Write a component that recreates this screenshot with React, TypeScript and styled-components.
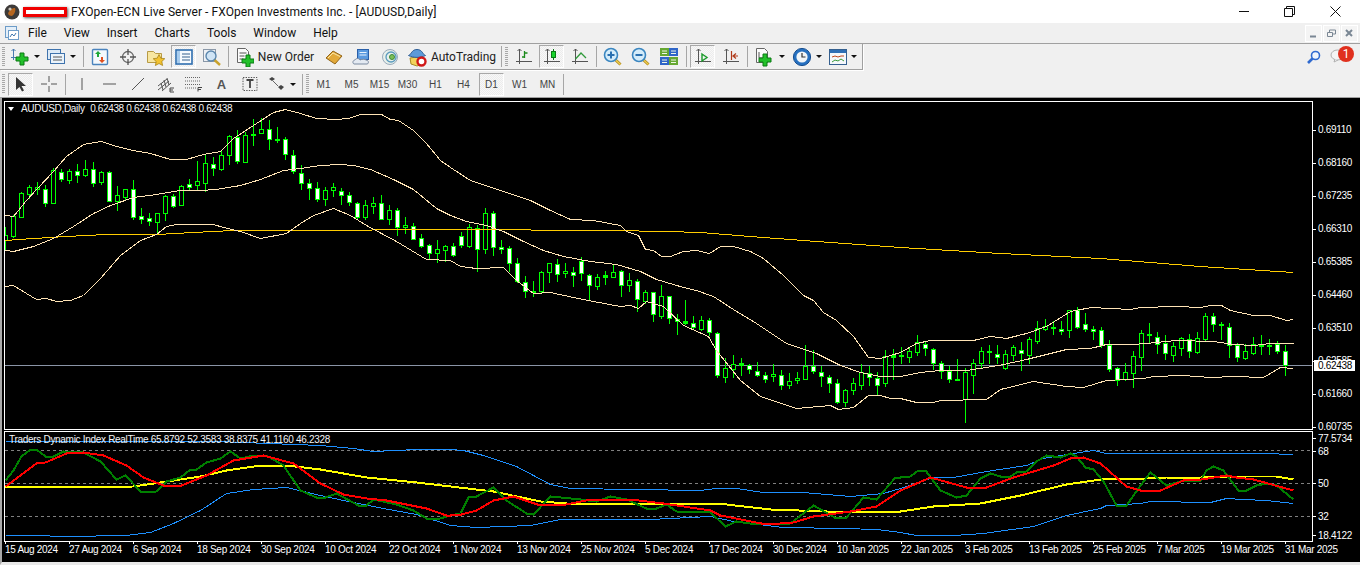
import React from "react";
import styled, { createGlobalStyle } from "styled-components";

const GlobalStyle = createGlobalStyle`
    html, body { margin: 0; padding: 0; background: #f0f0f0; overflow: hidden; }
    #root { width: 1360px; height: 565px; }
`;

const UI_FONT = `Roboto, "Liberation Sans", sans-serif`;
const CHART_FONT = `"Liberation Sans", Arial, sans-serif`;

// ---- chart data, read off the picture in 3x pixels: [origin x, origin y] + values
type Candle = [number, number, number, number, number]; // high, top, bottom, low, kind (0 hollow, 1 white, 2 doji)

const candlesA: Candle[] = [
    [380,405,420,450,0],[345,348,408,412,0],[275,280,350,350,0],[255,262,282,295,0],[245,262,268,282,0],[255,268,308,318,1],[205,210,308,310,0],[208,215,236,244,1],
    [208,214,240,250,0],[193,212,224,246,1],[180,208,224,228,0],[186,208,248,258,1],[212,217,246,252,0],[214,217,302,304,1],[258,286,304,330,0],[268,268,291,298,0],
    [240,268,352,356,1],[325,349,356,370,1],[340,355,362,375,1],[338,340,365,398,0],[285,288,340,360,0],[282,289,317,320,1],[255,259,314,316,0],[238,253,260,268,1],
    [183,244,254,270,0],[165,190,248,272,0],[172,191,203,225,1],[150,166,208,210,0],[105,108,166,192,0],[90,110,182,188,1],[95,106,185,185,0],[57,103,106,135,2],
    [55,88,98,100,0],[60,88,118,148,1],[82,118,121,125,2],[112,118,163,177,1],[150,164,214,218,1],[195,220,250,267,1],[238,250,265,297,1],[246,265,296,304,1],
    [260,271,296,315,0],[250,262,271,288,0],[265,274,286,312,1],[277,286,307,316,1],[306,310,350,358,1],[300,316,350,356,0],[292,310,319,340,0],[285,310,356,358,1],
    [315,331,356,372,0],[325,331,382,405,1],[352,376,382,398,0],[370,377,418,418,1],[403,415,437,440,1],[432,436,460,478,1],[420,448,460,485,0],[435,439,449,482,0],
];
const candlesB: Candle[] = [
    [128,139,166,168,1],[97,109,134,140,1],[72,80,137,142,0],[75,84,148,212,1],[25,38,148,158,0],[33,38,142,165,1],[120,140,146,158,1],[138,145,190,212,1],
    [175,190,242,245,1],[228,245,274,290,1],[243,272,277,287,0],[212,217,273,277,0],[190,190,217,246,0],[178,193,221,243,1],[190,214,220,231,0],[202,215,226,258,1],
    [170,184,220,240,1],[222,224,254,297,1],[222,230,257,266,0],[212,226,230,251,2],[195,217,230,230,0],[210,214,254,288,1],[220,241,254,273,0],[238,243,298,332,1],
    [270,277,303,308,0],[275,277,343,362,1],[256,289,347,355,0],[287,289,355,368,1],[342,358,364,402,1],[300,364,368,372,2],[348,368,380,384,1],[348,361,387,390,0],
    [355,361,397,405,1],[396,400,526,530,1],[474,505,530,546,0],[465,493,506,530,0],[475,490,495,525,2],[492,494,508,518,1],[486,512,524,527,1],[517,524,536,545,1],
    [492,523,529,542,0],[510,524,556,567,1],[519,542,556,563,0],[516,533,541,550,0],[435,497,536,536,0],[450,497,514,520,1],[498,515,529,557,1],[526,530,550,576,1],
    [537,550,607,608,1],[566,571,605,618,0],[534,550,571,582,0],[492,517,554,566,0],[497,518,532,555,1],[515,535,556,586,1],[450,467,548,557,0],[447,464,470,536,2],
];
const candlesC: Candle[] = [
    [200,226,228,250,2],[200,214,230,246,0],[165,187,215,225,0],[182,191,205,225,1],[205,208,248,266,1],[244,250,274,294,1],[258,274,296,306,1],[238,298,300,300,2],
    [265,276,356,426,0],[238,250,284,340,0],[200,214,250,265,0],[195,214,217,248,2],[195,221,230,250,1],[210,222,263,266,0],[195,202,225,240,0],[186,211,220,270,1],
    [172,178,224,248,0],[124,145,182,188,0],[118,138,146,150,0],[124,140,143,162,2],[122,146,152,162,1],[90,90,151,170,0],[82,91,140,143,1],[100,133,146,152,1],
    [138,148,154,178,1],[140,151,194,202,1],[180,195,266,272,1],[262,265,300,315,1],[248,276,296,300,0],[212,229,278,320,0],[150,160,230,270,0],[128,162,164,190,2],
    [156,170,193,220,1],[165,190,220,238,1],[186,199,224,243,0],[170,175,203,226,0],[162,178,214,230,1],[155,175,215,220,0],[100,108,177,180,0],[98,109,133,152,1],
    [125,133,136,178,2],[130,140,195,230,1],[190,196,230,242,1],[192,214,234,237,0],[172,193,218,222,0],[166,195,196,222,0],[178,194,199,222,2],[184,191,214,218,1],
    [196,214,256,285,1],
];

const path = (parts: [number, number, number[]][]) =>
    parts
        .map(([ox, oy, v]) => {
            const out: string[] = [];
            for (let i = 0; i < v.length; i += 2) {
                out.push(`${Math.floor(ox + v[i] / 3) + 0.5},${Math.floor(oy + v[i + 1] / 3) + 0.5}`);
            }
            return out.join(" ");
        })
        .join(" ");

const bandUpper = path([
    [0,100,[16,345,40,350,80,300,112,265,160,215,200,170,250,132,305,124,350,138,400,152,450,160,510,178,560,178,610,162,660,155,700,115,760,75,820,38,855,28,900,40,950,55,1010,58,1045,55,1080,44,1145,43,1170,57,1195,60,1240,90,1280,130,1320,180,1350,202]],
    [450,200,[60,-60,150,-30,240,0,300,30,360,58,430,62,510,75,530,95,565,105,585,147,610,152,635,168,660,170,700,155,740,150,778,160,810,140,850,140,900,153,940,175,1000,225,1060,285,1090,300,1120,338,1160,360,1210,410,1255,472,1290,475,1350,457]],
    [900,280,[50,190,90,182,220,182,270,170,320,176,380,160,440,140,510,95,575,82,690,88,720,82,830,80,900,82,930,76,965,76,990,90,1060,105,1110,105,1160,122,1180,118]],
]);
const bandMiddle = path([
    [0,100,[16,452,40,453,100,438,160,415,220,380,280,340,330,315,400,292,470,282,540,272,600,270,650,267,720,255,780,238,850,212,900,205,960,196,1020,193,1060,197,1110,208,1180,238,1240,268,1310,325]],
    [450,200,[0,47,50,65,110,75,160,95,220,125,280,152,340,168,420,185,500,192,570,215,620,238,700,262,740,270,790,290,850,328,920,370,1010,430,1100,460,1170,495,1230,518,1290,530,1350,528]],
    [900,280,[60,278,120,272,200,272,260,262,310,252,380,238,440,222,500,208,570,205,620,193,700,193,770,186,830,182,940,184,1000,192,1060,196,1110,190,1180,190]],
]);
const bandLower = path([
    [0,100,[16,560,40,557,80,580,110,597,140,596,170,604,210,602,250,585,300,535,360,465,420,420,470,402,500,380,530,373,640,373,670,382,720,395,780,415,860,400,900,370,940,345,1000,325,1050,345,1100,375,1190,425,1280,478,1350,482]],
    [450,200,[30,198,80,205,160,203,200,240,250,280,300,278,370,293,430,305,510,320,540,316,565,325,590,305,640,320,700,375,775,410,800,450,870,540,930,590,1040,625,1140,616,1165,628,1210,622,1255,587,1290,587,1320,596,1350,596]],
    [900,280,[50,367,100,367,120,360,260,358,300,328,400,305,500,318,550,322,620,300,730,295,760,288,850,286,930,292,1000,290,1090,292,1140,262,1180,264]],
]);
const movingAverage = path([
    [0,100,[16,421,100,414,200,408,320,403,470,402,580,398,700,392,1050,392,1180,388]],
    [450,200,[0,88,480,90,650,93,750,98,900,108,1100,125,1350,142]],
    [900,200,[300,160,600,175,900,198,1180,218]],
]);

const tdiUpper = path([
    [0,425,[16,48,650,48,960,60,1060,70,1120,78,1250,73]],
    [450,425,[0,74,40,76,100,90,200,125,300,178,360,190,750,195,800,190,860,190,940,203,1060,203,1200,214,1300,205]],
    [900,425,[0,190,100,158,160,157,260,138,380,120,430,100,500,88,580,76,620,85,850,85,1090,85,1180,88]],
]);
const tdiLower = path([
    [0,425,[16,331,100,332,200,334,380,331,450,322,520,295,600,255,680,206,760,193,860,187,960,210,1030,225,1150,250,1250,268]],
    [450,425,[0,300,80,308,240,300,330,282,600,282,780,275,850,290,1000,307,1180,310,1280,313]],
    [900,425,[0,322,50,331,160,331,250,326,400,305,500,272,600,250,620,240,720,236,750,230,930,232,980,220,1030,224,1100,226,1180,235]],
]);
const tdiYellow = path([
    [0,425,[16,187,400,185,480,173,600,155,680,135,780,122,860,120,960,132,1100,158,1250,172]],
    [450,425,[0,185,130,200,270,230,350,235,830,237,960,254,1130,260]],
    [900,425,[0,258,100,245,240,236,360,210,500,178,600,163,740,160,800,157,900,158,1040,153,1130,155,1180,162]],
]);
const tdiRed = path([
    [0,425,[16,185,110,115,135,113,200,85,250,83,310,92,380,120,430,157,490,180,545,182,620,150,700,107,790,90,880,115,960,175,1030,208,1100,221,1160,225,1280,250,1340,270]],
    [450,425,[0,270,35,268,80,255,130,225,190,215,270,240,350,238,420,222,540,222,640,235,780,255,810,270,950,297,1030,293,1090,275,1200,258,1280,245]],
    [900,425,[0,197,90,158,200,187,260,188,340,158,460,122,510,100,550,98,600,115,680,185,720,195,780,195,850,165,905,163,980,150,1010,158,1060,162,1180,195]],
]);
const tdiGreen = path([
    [0,425,[16,165,40,135,65,95,90,72,110,72,135,93,160,93,190,80,250,83,300,108,350,162,375,150,425,203,470,200,500,170,540,158,570,133,590,133,620,112,660,100,690,78,720,100,760,90,800,90,850,120,900,195,950,217,975,217,1010,205,1075,240,1100,240,1120,222,1190,237,1240,255,1280,280,1310,283]],
    [450,425,[0,270,30,265,55,218,80,215,130,187,170,225,230,265,250,267,300,215,390,222,440,230,480,215,530,222,590,250,620,250,650,238,680,258,780,262,825,305,860,288,920,298,1020,295,1090,240,1160,280,1190,277,1240,218,1280,222,1335,158]],
    [900,425,[0,158,30,155,55,137,75,137,120,195,170,218,200,210,240,160,270,145,300,155,330,155,350,143,380,140,410,108,440,90,480,98,510,85,530,95,555,128,580,132,610,170,650,242,680,242,720,180,750,143,800,180,850,165,900,165,920,135,940,125,970,135,1015,195,1040,195,1070,180,1100,175,1130,180,1180,222]],
]);

const prices = ["0.69110", "0.68160", "0.67235", "0.66310", "0.65385", "0.64460", "0.63510", "0.62585", "0.61660", "0.60735"];
const indicatorScale: [string, number][] = [["77.5734", 14], ["68", 12], ["50", 52], ["32", 14], ["18.4122", 24]];
const dates = ["15 Aug 2024", "27 Aug 2024", "6 Sep 2024", "18 Sep 2024", "30 Sep 2024", "10 Oct 2024", "22 Oct 2024", "1 Nov 2024", "13 Nov 2024", "25 Nov 2024", "5 Dec 2024", "17 Dec 2024", "30 Dec 2024", "10 Jan 2025", "22 Jan 2025", "3 Feb 2025", "13 Feb 2025", "25 Feb 2025", "7 Mar 2025", "19 Mar 2025", "31 Mar 2025"];

// ---- styled parts
const Page = styled.div`
    width: 1360px;
    height: 565px;
    display: flex;
    flex-direction: column;
    background: #f0f0f0;
    font-family: ${UI_FONT};
    overflow: hidden;
`;

const TitleBar = styled.div`
    height: 23px;
    display: flex;
    align-items: center;
    background: #fff;
    padding-left: 4px;
    font-size: 12px;
    letter-spacing: 0.06px;
    color: #111;
`;

const Redaction = styled.div`
    width: 38px;
    height: 4px;
    margin: 0 4px 0 3px;
    border: 3px solid #f00000;
    background: #fff;
    box-shadow: 1px 1px 3px #555;
`;

const WindowButtons = styled.div`
    margin-left: auto;
    display: flex;
    padding-right: 2px;
`;

const WindowButton = styled.div`
    width: 45.5px;
    height: 20px;
    display: flex;
    align-items: center;
    justify-content: center;
`;

const MenuBar = styled.div`
    height: 20px;
    display: flex;
    align-items: center;
    gap: 17px;
    padding-left: 5px;
    font-size: 12px;
    color: #111;
    border-bottom: 1px solid #a0a0a0;
`;

const MenuLogo = styled.div`
    width: 14px;
    height: 14px;
    margin-right: -8px;
    display: flex;
`;

const MdiButtons = styled.div`
    margin-left: auto;
    display: flex;
    gap: 1px;
    padding-right: 2px;
`;

const MdiButton = styled.div`
    width: 17px;
    height: 17px;
    display: flex;
    align-items: center;
    justify-content: center;
    background: #f4f4f4;
    border: 1px solid #fff;
    box-sizing: border-box;
`;

const ToolRow = styled.div<{ $last?: boolean }>`
    height: 27px;
    display: flex;
    box-sizing: border-box;
    border-bottom: 1px solid ${(p) => (p.$last ? "#a0a0a0" : "transparent")};
`;

const Toolbar = styled.div<{ $edge?: boolean }>`
    height: 26px;
    display: flex;
    align-items: center;
    gap: 3px;
    padding: 0 3px 0 2px;
    box-sizing: border-box;
    ${(p) => p.$edge && "border-right: 1px solid #a0a0a0; border-bottom: 1px solid #a0a0a0; box-shadow: 1px 1px 0 #fff;"}
`;

const Grip = styled.div<{ $l?: number; $r?: number }>`
    width: 3px;
    height: 20px;
    margin-left: ${(p) => p.$l ?? 0}px;
    margin-right: ${(p) => p.$r ?? 0}px;
    background: repeating-linear-gradient(#a8a8a8 0 1px, transparent 1px 2px);
`;

const Sep = styled.div<{ $l?: number }>`
    width: 1px;
    height: 21px;
    margin-left: ${(p) => p.$l ?? 0}px;
    background: #a6a6a6;
`;

const Btn = styled.div<{ $w?: number; $on?: boolean }>`
    width: ${(p) => p.$w ?? 25}px;
    height: 23px;
    flex: none;
    display: flex;
    align-items: center;
    justify-content: center;
    gap: 4px;
    box-sizing: border-box;
    color: #222;
    font-size: 12px;
    ${(p) =>
        p.$on &&
        `border: 1px solid; border-color: #a8a8a8 #fff #fff #a8a8a8;
         background: repeating-conic-gradient(#f8f8f8 0 25%, #ececec 0 50%) 0 0 / 2px 2px;`}
`;

const Period = styled(Btn)`
    color: #444;
    font-size: 10px;
    font-family: ${CHART_FONT};
`;

const Caret = styled.i`
    width: 0;
    height: 0;
    border: 3px solid transparent;
    border-top: 3px solid #111;
    border-bottom: 0;
`;

const RightTools = styled.div`
    margin-left: auto;
    display: flex;
    align-items: center;
    gap: 9px;
    padding-right: 6px;
    height: 26px;
`;

const Notice = styled.div`
    position: relative;
    width: 24px;
    height: 20px;
`;

const Badge = styled.div`
    position: absolute;
    top: -1px;
    right: 0;
    width: 16px;
    height: 16px;
    border-radius: 50%;
    background: #e0301e;
    color: #fff;
    font-size: 12px;
    line-height: 16px;
    text-align: center;
`;

const ChartArea = styled.div`
    flex: 1;
    min-height: 0;
    background: #000;
    border-left: 2px solid #a8a8a8;
    border-bottom: 3px solid #e8e8e8;
    padding: 3px 0 0 2px;
    color: #fff;
    font-family: ${CHART_FONT};
    font-size: 10px;
    letter-spacing: -0.3px;
    overflow: hidden;
`;

const Pane = styled.div<{ $h: number }>`
    display: flex;
    height: ${(p) => p.$h}px;
    margin-bottom: 1px;
`;

const Plot = styled.div`
    position: relative;
    width: 1309px;
    height: 100%;
    box-sizing: border-box;
    border: 1px solid #fff;
    flex: none;
    overflow: hidden;
    svg { display: block; }
`;

const Legend = styled.div<{ $top: number; $left: number }>`
    position: absolute;
    top: ${(p) => p.$top}px;
    left: ${(p) => p.$left}px;
    white-space: pre;
    line-height: 12px;
    color: #f4f4f4;
`;

const LegendValues = styled.span`
    margin-left: 3px;
    letter-spacing: -0.35px;
`;

const LegendArrow = styled.i`
    display: inline-block;
    width: 0;
    height: 0;
    border: 3.5px solid transparent;
    border-top: 4px solid #fff;
    border-bottom: 0;
    margin: 0 7px 1px 0;
`;

const PriceScale = styled.div`
    position: relative;
    padding-top: 12px;
    width: 47px;
`;

const ScaleRow = styled.div<{ $h: number }>`
    height: ${(p) => p.$h}px;
    display: flex;
    align-items: center;
    padding-left: 5px;
    position: relative;
    &::before {
        content: "";
        position: absolute;
        left: 0;
        top: 50%;
        width: 3px;
        height: 1px;
        background: #fff;
    }
`;

const PriceTag = styled.div`
    position: absolute;
    left: 1px;
    top: 259px;
    width: 37px;
    height: 11px;
    padding-left: 4px;
    background: #fff;
    color: #000;
    line-height: 11px;
`;

const IndicatorScale = styled.div`
    width: 47px;
`;

const DateAxis = styled.div`
    display: flex;
    padding-left: 1px;
    margin-top: -2px;
    height: 20px;
`;

const DateCell = styled.div`
    width: 64px;
    flex: none;
    position: relative;
    padding-top: 3px;
    line-height: 12px;
    white-space: nowrap;
    &::before {
        content: "";
        position: absolute;
        left: 0;
        top: 0;
        width: 1px;
        height: 3px;
        background: #fff;
    }
`;

// ---- drawings
const Plus = ({ x, y, s = 5 }: { x: number; y: number; s?: number }) => (
    <path d={`M${x - s / 3} ${y - s}h${(2 * s) / 3}v${(2 * s) / 3}h${(2 * s) / 3}v${(2 * s) / 3}h-${(2 * s) / 3}v${(2 * s) / 3}h-${(2 * s) / 3}v-${(2 * s) / 3}h-${(2 * s) / 3}v-${(2 * s) / 3}h${(2 * s) / 3}z`} fill="#22c02a" stroke="#0a7a14" strokeWidth="1" />
);

const Axes = ({ children }: { children?: React.ReactNode }) => (
    <svg width="18" height="18" viewBox="0 0 18 18">
        <path d="M4.5 1v15M1 13.5h16M2.5 3l2-2 2 2" fill="none" stroke="#555" strokeWidth="1" />
        {children}
    </svg>
);

const Lens = ({ minus }: { minus?: boolean }) => (
    <svg width="20" height="20" viewBox="0 0 20 20">
        <path d="M11.5 12l6 5.5" stroke="#b08a20" strokeWidth="3" />
        <path d="M11.5 12l6 5.5" stroke="#f0d050" strokeWidth="1.2" />
        <circle cx="8" cy="8" r="6.5" fill="#d4ecfa" stroke="#3a86c0" strokeWidth="1.6" />
        <path d={minus ? "M4.5 8h7" : "M4.5 8h7M8 4.5v7"} stroke="#2a70b0" strokeWidth="2" />
    </svg>
);

const icons: Record<string, React.ReactNode> = {
    newChart: (
        <svg width="20" height="18" viewBox="0 0 20 18">
            <path d="M3.5 1v11M1 9.5h13M1.5 3l2-2 2 2M12 7.5l2 2-2 2" fill="none" stroke="#4a7ab0" />
            <Plus x={12} y={11} s={6} />
        </svg>
    ),
    profiles: (
        <svg width="20" height="18" viewBox="0 0 20 18">
            <rect x="1.5" y="1.5" width="13" height="10" fill="#dceaf7" stroke="#3f73ad" />
            <rect x="4.5" y="5.5" width="14" height="10" fill="#eaf3fb" stroke="#3f73ad" />
            <path d="M7 9h9M7 12h9" stroke="#555" />
        </svg>
    ),
    watch: (
        <svg width="18" height="18" viewBox="0 0 18 18">
            <rect x="1.5" y="1.5" width="15" height="15" rx="1" fill="#f4f8fc" stroke="#4a83bd" strokeWidth="1.4" />
            <path d="M7 3l3 3H8v3H6V6H4z" fill="#1ea83a" />
            <path d="M11 15l3-3h-2V9h-2v3H8z" fill="#e0501e" />
        </svg>
    ),
    cross: (
        <svg width="18" height="18" viewBox="0 0 18 18">
            <circle cx="9" cy="9" r="5.5" fill="none" stroke="#666" strokeWidth="1.3" />
            <path d="M9 1v6M9 11v6M1 9h6M11 9h6" stroke="#555" strokeWidth="1.3" />
        </svg>
    ),
    folder: (
        <svg width="20" height="18" viewBox="0 0 20 18">
            <path d="M1.5 3.5h6l2 2h6v9h-14z" fill="#f7e6a0" stroke="#b79a45" />
            <path d="M13 6.5l1.8 3.7 4 .5-3 2.8.8 4-3.6-2-3.6 2 .8-4-3-2.8 4-.5z" fill="#f2c230" stroke="#a88418" strokeWidth=".8" />
        </svg>
    ),
    terminal: (
        <svg width="18" height="16" viewBox="0 0 18 16">
            <rect x="1" y="1" width="16" height="14" fill="#f6fafe" stroke="#2f6fb0" strokeWidth="1.6" />
            <path d="M2 2v12h3V2z" fill="#a9cdee" />
            <path d="M7 5h8M7 8h8M7 11h8" stroke="#36608c" />
        </svg>
    ),
    tester: (
        <svg width="20" height="20" viewBox="0 0 20 20">
            <rect x="1.5" y="2.5" width="12" height="12" fill="#eef1f5" stroke="#8a98a8" />
            <path d="M12 12.5l6 5.5" stroke="#c9a22c" strokeWidth="2.4" />
            <circle cx="9" cy="9" r="5" fill="#cfe4f5" stroke="#5a86ad" strokeWidth="1.4" />
        </svg>
    ),
    order: (
        <svg width="18" height="20" viewBox="0 0 18 20">
            <path d="M1.5 1.5h8l3 3v11h-11z" fill="#fbfbfb" stroke="#666" />
            <path d="M3.5 6h7M3.5 9h5M3.5 12h4" stroke="#555" />
            <Plus x={12} y={14} s={6} />
        </svg>
    ),
    book: (
        <svg width="18" height="16" viewBox="0 0 18 16">
            <path d="M1 9l7-7 9 5-7 8z" fill="#e2a93a" stroke="#92651a" />
            <path d="M3 9l5-5 7 3.5" fill="none" stroke="#f9e6a8" />
        </svg>
    ),
    cloud: (
        <svg width="20" height="18" viewBox="0 0 20 18">
            <rect x="5.5" y="1.5" width="11" height="10" fill="#5a9ae0" stroke="#2a5fa8" />
            <path d="M7.5 4.5h7M7.5 7h7" stroke="#e8f2fc" />
            <path d="M2 16c-2-1-1-4 1-4 1-2 4-2 5 0 2-1 5-1 6 0 3 0 3 4 1 4z" fill="#e4eaf2" stroke="#7b8aa0" />
        </svg>
    ),
    signal: (
        <svg width="18" height="18" viewBox="0 0 18 18">
            <circle cx="9" cy="9" r="7.5" fill="#e8f0ea" stroke="#9ab" strokeWidth="1" />
            <circle cx="10" cy="9" r="5" fill="none" stroke="#5a9abf" strokeWidth="1.3" />
            <circle cx="11" cy="9" r="2.5" fill="#7dbf58" stroke="#3b8a3a" />
        </svg>
    ),
    auto: (
        <svg width="20" height="20" viewBox="0 0 20 20">
            <path d="M3 11l7-1 7 1-1 6-6 2-6-2z" fill="#f3d35a" stroke="#a88b25" />
            <path d="M1.5 8.5c3-1 3-6 8.5-6s5.5 5 8.5 6c-5 2.5-12 2.5-17 0z" fill="#5d9ad8" stroke="#2f5e96" />
            <circle cx="14.5" cy="14.5" r="4" fill="#fff" stroke="#d01818" strokeWidth="2.4" />
        </svg>
    ),
    bars: (
        <Axes>
            <path d="M9.5 3v7M9.5 9H7M9.5 5h3" stroke="#1a8a1a" strokeWidth="1.3" fill="none" />
        </Axes>
    ),
    candle: (
        <Axes>
            <path d="M10.5 1v11" stroke="#0a7a14" />
            <rect x="8.5" y="3.5" width="4" height="6" fill="#19d32c" stroke="#0a7a14" />
        </Axes>
    ),
    line: (
        <Axes>
            <path d="M4.5 11L10 5l5 5" fill="none" stroke="#2f9a3a" strokeWidth="1.3" />
        </Axes>
    ),
    zoomIn: <Lens />,
    zoomOut: <Lens minus />,
    tile: (
        <svg width="18" height="17" viewBox="0 0 18 17">
            <rect x="0" y="0" width="9" height="8" fill="#66a832" />
            <rect x="9" y="0" width="9" height="8" fill="#2f66c8" />
            <rect x="0" y="9" width="9" height="8" fill="#2f66c8" />
            <rect x="9" y="9" width="9" height="8" fill="#66a832" />
            <path d="M2 3h5M2 5.5h5M11 3h5M11 5.5h5M2 12h5M2 14.5h5M11 12h5M11 14.5h5" stroke="#eef6e6" />
        </svg>
    ),
    scroll: (
        <Axes>
            <path d="M8 6v7l5-3.5z" fill="none" stroke="#1a9a2a" strokeWidth="1.4" />
        </Axes>
    ),
    shift: (
        <Axes>
            <path d="M9.5 3v9M16 8h-4M14 5.5L11 8l3 2.5" fill="none" stroke="#b03a1a" strokeWidth="1.2" />
        </Axes>
    ),
    addWindow: (
        <svg width="22" height="20" viewBox="0 0 22 20">
            <path d="M3.5 1.5h8l3 3v11h-11z" fill="#fbfbfb" stroke="#666" />
            <path d="M6 5v6h6" fill="none" stroke="#555" />
            <Plus x={12} y={13} s={6} />
        </svg>
    ),
    clock: (
        <svg width="20" height="20" viewBox="0 0 20 20">
            <circle cx="10" cy="10" r="8.6" fill="#2670c0" stroke="#184f90" />
            <circle cx="10" cy="10" r="5.6" fill="#f1f5f8" />
            <path d="M10 6v4h3.5" fill="none" stroke="#333" strokeWidth="1.2" />
        </svg>
    ),
    template: (
        <svg width="18" height="16" viewBox="0 0 18 16">
            <rect x=".5" y=".5" width="17" height="15" fill="#f6f8fb" stroke="#35608f" />
            <rect x="1" y="1" width="16" height="3" fill="#2f6fb5" />
            <path d="M3 8l3-1 3 1 3-1 3 0" fill="none" stroke="#c0481e" />
            <path d="M3 13l3-2 3 1 3-2 3 2" fill="none" stroke="#3a9a3a" />
        </svg>
    ),
    pointer: (
        <svg width="14" height="16" viewBox="0 0 14 16">
            <path d="M2 1v13l3.5-3 2.5 4.5 2-1-2.5-4.5H12z" fill="#333" />
        </svg>
    ),
    crossLine: (
        <svg width="16" height="16" viewBox="0 0 16 16">
            <path d="M8 0v6M8 10v6M0 8h6M10 8h6" stroke="#555" />
        </svg>
    ),
    vert: (
        <svg width="16" height="16" viewBox="0 0 16 16">
            <path d="M8 2v12" stroke="#555" />
        </svg>
    ),
    horiz: (
        <svg width="16" height="16" viewBox="0 0 16 16">
            <path d="M1 8h13" stroke="#555" />
        </svg>
    ),
    trend: (
        <svg width="16" height="16" viewBox="0 0 16 16">
            <path d="M2 14L14 2" stroke="#555" />
        </svg>
    ),
    channel: (
        <svg width="18" height="18" viewBox="0 0 18 18">
            <path d="M1 11l9-7M1 15l11-9M5 16l9-8M4 8l2 7M7 5l2 7M10 3l2 7" stroke="#555" fill="none" />
            <path d="M13 17v-4h4M13 15h3M13 17h4" stroke="#444" fill="none" />
        </svg>
    ),
    fib: (
        <svg width="18" height="16" viewBox="0 0 18 16">
            <path d="M0 1.5h15M0 5h15M0 8.5h15M0 12h11" stroke="#666" strokeDasharray="1 1" />
            <path d="M13 15.5v-4h4M13 13.5h3" stroke="#444" fill="none" />
        </svg>
    ),
    textFrame: (
        <svg width="16" height="16" viewBox="0 0 16 16">
            <path d="M1 1.5h14v13H1z" fill="none" stroke="#555" strokeDasharray="1.4 1.2" />
            <path d="M4.5 4h7M8 4v8" stroke="#444" strokeWidth="1.8" />
        </svg>
    ),
    arrows: (
        <svg width="18" height="16" viewBox="0 0 18 16">
            <path d="M1 3l3-2 3 2-3 2z" fill="#444" />
            <path d="M5 5l5 5" stroke="#666" />
            <path d="M10 11l3-2 3 2-3 3z" fill="#444" />
        </svg>
    ),
    search: (
        <svg width="15" height="15" viewBox="0 0 15 15">
            <circle cx="9.5" cy="5.5" r="4" fill="#eef4fc" stroke="#2f6ad0" strokeWidth="1.6" />
            <path d="M6.5 8.5L2 13" stroke="#2f6ad0" strokeWidth="2.6" />
        </svg>
    ),
    bubble: (
        <svg width="16" height="16" viewBox="0 0 16 16">
            <ellipse cx="7.5" cy="8" rx="6.5" ry="5" fill="#f4f4f4" stroke="#b0b0b0" />
            <path d="M5 12l-1 3 4-2" fill="#f4f4f4" stroke="#b0b0b0" />
        </svg>
    ),
};

const LargeA = styled.span`
    font-family: ${CHART_FONT};
    font-size: 13px;
    font-weight: 700;
    color: #555;
`;

const AppBall = () => (
    <svg width="16" height="16" viewBox="0 0 16 16">
        <circle cx="8" cy="8" r="7.5" fill="#3d3a38" />
        <path d="M4 10c1-4 4-6 7-6 1 2 0 6-3 8-2 0-3-1-4-2z" fill="#b5651d" />
        <circle cx="6" cy="5" r="1.6" fill="#c9c4bb" />
    </svg>
);

const MenuIcon = () => (
    <svg width="14" height="14" viewBox="0 0 14 14">
        <rect x=".5" y=".5" width="11" height="11" fill="#e4eff9" stroke="#6d9cc8" />
        <rect x="3.5" y="4.5" width="10" height="9" fill="#fff" stroke="#6d9cc8" />
        <path d="M5 11l2-3 2 2 2-3" fill="none" stroke="#3f76ad" />
    </svg>
);

const CANDLE_GREEN = "#00ff00";

// filled rects on whole pixels, so the candles stay as sharp as the GDI ones in the terminal
const ChartCandles = ({ data, start, oy }: { data: Candle[]; start: number; oy: number }) => (
    <>
        {data.map(([h, t, b, l, kind], n) => {
            const x = Math.floor(5.33 + 8 * (start + n));
            const y = (v: number) => Math.round(oy + v / 3);
            const top = y(t);
            const height = Math.max(2, y(b) - top + 1);
            return (
                <g key={n}>
                    <rect x={x} y={y(h)} width={1} height={y(l) - y(h) + 1} fill={CANDLE_GREEN} />
                    <rect x={x - 2} y={top} width={5} height={height} fill={CANDLE_GREEN} />
                    {kind !== 2 && height > 2 && (
                        <rect x={x - 1} y={top + 1} width={3} height={height - 2} fill={kind === 1 ? "#fff" : "#000"} />
                    )}
                </g>
            );
        })}
    </>
);

const Line = ({ points, color, width = 1 }: { points: string; color: string; width?: number }) => (
    <polyline points={points} fill="none" stroke={color} strokeWidth={width} shapeRendering="crispEdges" />
);

const MainChart = () => (
    <svg width="1307" height="327" viewBox="5 102 1307 327" shapeRendering="crispEdges">
        <path d="M5 365.5H1312" stroke="#8a94a6" />
        <ChartCandles data={candlesA} start={0} oy={100} />
        <ChartCandles data={candlesB} start={56} oy={200} />
        <ChartCandles data={candlesC} start={112} oy={280} />
        <Line points={movingAverage} color="#ffcc00" />
        <Line points={bandUpper} color="#ffe4b5" />
        <Line points={bandMiddle} color="#ffe4b5" />
        <Line points={bandLower} color="#ffe4b5" />
    </svg>
);

const IndicatorChart = () => (
    <svg width="1307" height="109" viewBox="5 432 1307 109" shapeRendering="crispEdges">
        {[450.5, 483.5, 516.5].map((y) => (
            <path key={y} d={`M5 ${y}H1312`} stroke="#808080" strokeDasharray="3 3" />
        ))}
        <Line points={tdiUpper} color="#1e90ff" />
        <Line points={tdiLower} color="#1e90ff" />
        <Line points={tdiYellow} color="#ffff00" width={2} />
        <Line points={tdiGreen} color="#008000" width={2} />
        <Line points={tdiRed} color="#ff0000" width={2} />
    </svg>
);

const App = () => (
    <>
        <GlobalStyle />
        <Page>
            <TitleBar>
                <AppBall />
                <Redaction />
                FXOpen-ECN Live Server - FXOpen Investments Inc. - [AUDUSD,Daily]
                <WindowButtons>
                    <WindowButton>
                        <svg width="11" height="11" viewBox="0 0 11 11"><path d="M0 5.5h10" stroke="#111" /></svg>
                    </WindowButton>
                    <WindowButton>
                        <svg width="11" height="11" viewBox="0 0 11 11"><path d="M.5 2.5h8v8h-8zM2.5 2.5v-2h8v8h-2" fill="none" stroke="#111" /></svg>
                    </WindowButton>
                    <WindowButton>
                        <svg width="11" height="11" viewBox="0 0 11 11"><path d="M.5.5l10 10M10.5.5l-10 10" stroke="#111" /></svg>
                    </WindowButton>
                </WindowButtons>
            </TitleBar>
            <MenuBar>
                <MenuLogo><MenuIcon /></MenuLogo>
                <span>File</span>
                <span>View</span>
                <span>Insert</span>
                <span>Charts</span>
                <span>Tools</span>
                <span>Window</span>
                <span>Help</span>
                <MdiButtons>
                    <MdiButton><svg width="9" height="9" viewBox="0 0 9 9"><path d="M1 7.5h6" stroke="#7a8794" strokeWidth="2" /></svg></MdiButton>
                    <MdiButton><svg width="9" height="9" viewBox="0 0 9 9"><path d="M.5 3.5h5v4h-5zM2.5 3V1h6v4H6" fill="none" stroke="#7a8794" /></svg></MdiButton>
                    <MdiButton><svg width="9" height="9" viewBox="0 0 9 9"><path d="M1 1l6 6M7 1L1 7" stroke="#7a8794" strokeWidth="2" /></svg></MdiButton>
                </MdiButtons>
            </MenuBar>
            <ToolRow>
                <Toolbar $edge>
                    <Grip />
                    <Btn $w={33}>{icons.newChart}<Caret /></Btn>
                    <Btn $w={33}>{icons.profiles}<Caret /></Btn>
                    <Sep $l={3} />
                    <Btn>{icons.watch}</Btn>
                    <Btn>{icons.cross}</Btn>
                    <Btn>{icons.folder}</Btn>
                    <Btn $on>{icons.terminal}</Btn>
                    <Btn>{icons.tester}</Btn>
                    <Sep $l={1} />
                    <Btn $w={86}>{icons.order}New Order</Btn>
                    <Btn>{icons.book}</Btn>
                    <Btn>{icons.cloud}</Btn>
                    <Btn>{icons.signal}</Btn>
                    <Btn $w={93}>{icons.auto}AutoTrading</Btn>
                    <Sep />
                    <Grip />
                    <Btn>{icons.bars}</Btn>
                    <Btn $on>{icons.candle}</Btn>
                    <Btn>{icons.line}</Btn>
                    <Sep $l={1} />
                    <Btn>{icons.zoomIn}</Btn>
                    <Btn>{icons.zoomOut}</Btn>
                    <Btn>{icons.tile}</Btn>
                    <Sep $l={2} />
                    <Btn $on>{icons.scroll}</Btn>
                    <Btn>{icons.shift}</Btn>
                    <Sep $l={1} />
                    <Btn $w={36}>{icons.addWindow}<Caret /></Btn>
                    <Btn $w={33}>{icons.clock}<Caret /></Btn>
                    <Btn $w={33}>{icons.template}<Caret /></Btn>
                </Toolbar>
                <RightTools>
                    {icons.search}
                    <Notice>
                        {icons.bubble}
                        <Badge>1</Badge>
                    </Notice>
                </RightTools>
            </ToolRow>
            <ToolRow $last>
                <Toolbar>
                    <Grip />
                    <Btn $on>{icons.pointer}</Btn>
                    <Btn>{icons.crossLine}</Btn>
                    <Sep $l={1} />
                    <Btn>{icons.vert}</Btn>
                    <Btn>{icons.horiz}</Btn>
                    <Btn>{icons.trend}</Btn>
                    <Btn>{icons.channel}</Btn>
                    <Btn>{icons.fib}</Btn>
                    <Btn><LargeA>A</LargeA></Btn>
                    <Btn>{icons.textFrame}</Btn>
                    <Btn $w={33}>{icons.arrows}<Caret /></Btn>
                    <Sep $l={1} />
                    <Grip $r={-1} />
                    {["M1", "M5", "M15", "M30", "H1", "H4"].map((p) => (
                        <Period key={p}>{p}</Period>
                    ))}
                    <Period $on>D1</Period>
                    <Period>W1</Period>
                    <Period>MN</Period>
                    <Sep />
                </Toolbar>
            </ToolRow>
            <ChartArea>
                <Pane $h={329}>
                    <Plot>
                        <MainChart />
                        <Legend $top={1} $left={3}>
                            <LegendArrow />AUDUSD,Daily <LegendValues>0.62438 0.62438 0.62438 0.62438</LegendValues>
                        </Legend>
                    </Plot>
                    <PriceScale>
                        {prices.map((p) => (
                            <ScaleRow key={p} $h={33}>{p}</ScaleRow>
                        ))}
                        <PriceTag>0.62438</PriceTag>
                    </PriceScale>
                </Pane>
                <Pane $h={111}>
                    <Plot>
                        <IndicatorChart />
                        <Legend $top={2} $left={4}>
                            Traders Dynamic Index RealTime 65.8792 52.3583 38.8375 41.1160 46.2328
                        </Legend>
                    </Plot>
                    <IndicatorScale>
                        {indicatorScale.map(([label, h]) => (
                            <ScaleRow key={label} $h={h}>{label}</ScaleRow>
                        ))}
                    </IndicatorScale>
                </Pane>
                <DateAxis>
                    {dates.map((d) => (
                        <DateCell key={d}>{d}</DateCell>
                    ))}
                </DateAxis>
            </ChartArea>
        </Page>
    </>
);

export default App;
